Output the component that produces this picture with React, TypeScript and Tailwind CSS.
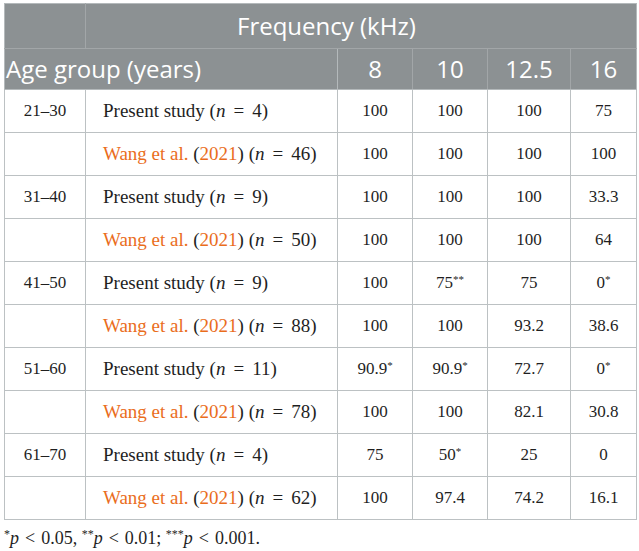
import React from "react";

type Row = {
  age: string;
  wang: boolean;
  n: number;
  vals: [string, string?][];
};

const rows: Row[] = [
  { age: "21–30", wang: false, n: 4, vals: [["100"], ["100"], ["100"], ["75"]] },
  { age: "", wang: true, n: 46, vals: [["100"], ["100"], ["100"], ["100"]] },
  { age: "31–40", wang: false, n: 9, vals: [["100"], ["100"], ["100"], ["33.3"]] },
  { age: "", wang: true, n: 50, vals: [["100"], ["100"], ["100"], ["64"]] },
  { age: "41–50", wang: false, n: 9, vals: [["100"], ["75", "**"], ["75"], ["0", "*"]] },
  { age: "", wang: true, n: 88, vals: [["100"], ["100"], ["93.2"], ["38.6"]] },
  { age: "51–60", wang: false, n: 11, vals: [["90.9", "*"], ["90.9", "*"], ["72.7"], ["0", "*"]] },
  { age: "", wang: true, n: 78, vals: [["100"], ["100"], ["82.1"], ["30.8"]] },
  { age: "61–70", wang: false, n: 4, vals: [["75"], ["50", "*"], ["25"], ["0"]] },
  { age: "", wang: true, n: 62, vals: [["100"], ["97.4"], ["74.2"], ["16.1"]] },
];

const freqs = ["8", "10", "12.5", "16"];

function N({ n }: { n: number }) {
  return (
    <>
      (<i>n</i>
      <span className="px-[8px]">=</span>
      {n})
    </>
  );
}

function Lt() {
  return <span className="px-[6px]">&lt;</span>;
}

export default function App() {
  return (
    <div className="h-[551px] w-[639px] bg-white pl-[4px] pt-[3px] font-['Liberation_Serif','Times_New_Roman',serif] text-[17px] text-[#1f1f1f]">
      <table className="w-[632px] table-fixed border-collapse font-['Liberation_Serif','Times_New_Roman',serif] text-[17px]">
        <colgroup>
          <col className="w-[81px]" />
          <col className="w-[252px]" />
          <col className="w-[75px]" />
          <col className="w-[75px]" />
          <col className="w-[83px]" />
          <col className="w-[66px]" />
        </colgroup>
        <thead className="bg-[#8c9193] font-['Open_Sans',sans-serif] text-[24px] font-normal text-white">
          <tr className="h-[45px]">
            <th className="border border-[#b4b9bb] border-r-[#a2a6a8] border-b-[#a2a6a8]" />
            <th
              colSpan={5}
              className="border border-[#b4b9bb] border-b-[#a2a6a8] pl-[151px] text-left font-normal"
            >
              Frequency (kHz)
            </th>
          </tr>
          <tr className="h-[41px]">
            <th
              colSpan={2}
              className="border border-[#b4b9bb] border-t-[#a2a6a8] pl-[1px] text-left font-normal"
            >
              Age group (years)
            </th>
            {freqs.map((f) => (
              <th
                key={f}
                className="border border-[#b4b9bb] border-x-[#a2a6a8] border-t-[#a2a6a8] text-center font-normal last:border-r-[#b4b9bb]"
              >
                {f}
              </th>
            ))}
          </tr>
        </thead>
        <tbody>
          {rows.map((r, i) => (
            <tr key={i} className="h-[43px]">
              <td className="border border-[#bcc1c3] text-center">{r.age}</td>
              <td className="border border-[#bcc1c3] pl-[17px] text-[19px]">
                {r.wang ? (
                  <>
                    <span className="text-[#ea6d1c]">Wang et al.</span> (
                    <span className="text-[#ea6d1c]">2021</span>) <N n={r.n} />
                  </>
                ) : (
                  <>
                    Present study <N n={r.n} />
                  </>
                )}
              </td>
              {r.vals.map(([v, s], j) => (
                <td key={j} className="border border-[#bcc1c3] text-center">
                  {v}
                  {s && <sup className="text-[11px]">{s}</sup>}
                </td>
              ))}
            </tr>
          ))}
        </tbody>
      </table>
      <p className="mt-[5px] text-[18px]">
        <sup className="text-[12px]">*</sup>
        <i>p</i>
        <Lt />
        0.05, <sup className="text-[12px]">**</sup>
        <i>p</i>
        <Lt />
        0.01; <sup className="text-[12px]">***</sup>
        <i>p</i>
        <Lt />
        0.001.
      </p>
    </div>
  );
}
